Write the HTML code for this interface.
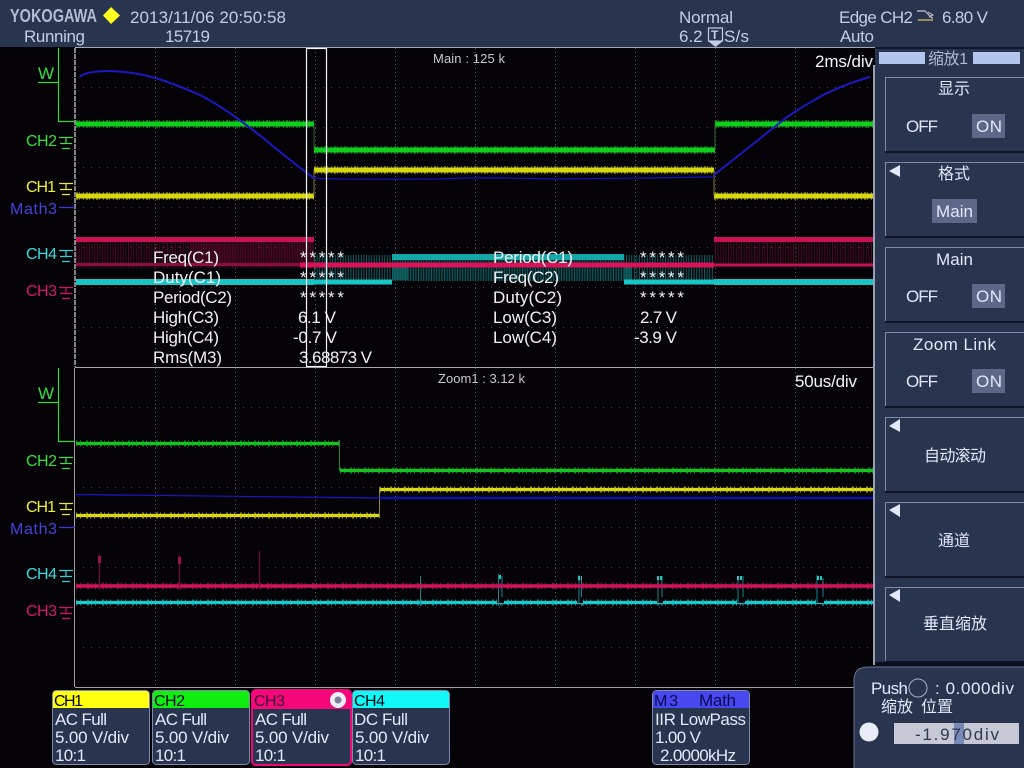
<!DOCTYPE html>
<html lang="zh">
<head>
<meta charset="utf-8">
<title>Oscilloscope</title>
<style>
html,body{margin:0;padding:0;width:1024px;height:768px;overflow:hidden;background:#050308}
svg{display:block}
text{font-family:"Liberation Sans","Noto Sans CJK SC",sans-serif;font-size:17px}
.h{fill:#c3cde6}
.m{fill:#f2f2f6}
.b{fill:#e2e8fa}
.d{fill:#050510}
.l{font-size:16px}
</style>
</head>
<body>
<svg width="1024" height="768" viewBox="0 0 1024 768" xmlns="http://www.w3.org/2000/svg">
<defs>
<pattern id="gv" x="155" y="48" width="80" height="4" patternUnits="userSpaceOnUse"><rect width="1" height="1" fill="#5e5e56"/></pattern>
<pattern id="gh" x="75" y="87" width="8" height="40" patternUnits="userSpaceOnUse"><rect width="1" height="1" fill="#4e4e4a"/></pattern>
</defs>

<!-- backgrounds -->
<rect width="1024" height="768" fill="#050308"/>
<rect width="1024" height="47" fill="#29344f"/>
<rect x="875" y="47" width="149" height="620" fill="#29344f"/>
<rect x="875" y="47" width="149" height="2" fill="#10162a"/>
<rect x="875" y="662" width="149" height="6" fill="#0b0f1c"/>

<!-- grid -->
<rect x="76" y="48" width="797" height="639" fill="url(#gv)"/>
<rect x="76" y="48" width="797" height="319" fill="url(#gh)"/>
<g transform="translate(0,320)"><rect x="76" y="48" width="797" height="319" fill="url(#gh)"/></g>

<!-- plot frame -->
<line x1="75" y1="47.5" x2="875" y2="47.5" stroke="#a8a8b0"/>
<line x1="75" y1="367.5" x2="873" y2="367.5" stroke="#a8a8a8"/>
<line x1="75" y1="687.5" x2="873" y2="687.5" stroke="#a0a0a0"/>
<line x1="75" y1="48" x2="75" y2="367" stroke="#b0b0b0" stroke-width="1.5" stroke-dasharray="5 1"/>
<line x1="74.5" y1="368" x2="74.5" y2="687" stroke="#a0a0a0"/>
<rect x="873" y="65" width="2" height="600" fill="#9aa0b4"/>

<!-- main traces: hatched bands -->
<line x1="76" y1="254" x2="314" y2="254" stroke="#4c0824" stroke-width="28" stroke-dasharray="1 1.6"/>
<rect x="235" y="241" width="78" height="26" fill="#4c0722" opacity=".5"/>
<rect x="190" y="243" width="45" height="22" fill="#500824" opacity=".6"/>
<line x1="715" y1="251" x2="873" y2="251" stroke="#4c0824" stroke-width="28" stroke-dasharray="1 1.6"/>
<line x1="314" y1="268" x2="714" y2="268" stroke="#0d5e5e" stroke-width="26" stroke-dasharray="1 1.6"/>
<rect x="392" y="255" width="232" height="26" fill="#0e5a5a" opacity=".25"/>
<rect x="392" y="266" width="16" height="14" fill="#126a6a" opacity=".7"/>
<rect x="624" y="266" width="8" height="14" fill="#126a6a" opacity=".7"/>

<!-- green main -->
<g stroke="#10cf1c" fill="none">
<path d="M76 124H314M715 124H873M314 150H715" stroke="#0f8a18" stroke-width="8" stroke-dasharray="2 1 1 3 1 2" opacity=".7"/>
<path d="M76 124H314M715 124H873M314 150H715" stroke="#10cf1c" stroke-width="5"/>
<path d="M314 124V150M715 124V150" stroke="#2c6a30" stroke-width="1"/>
</g>
<!-- yellow main -->
<g fill="none" stroke="#d8d812">
<path d="M76 196H314M314 170H714M714 196H873" stroke="#8a8a12" stroke-width="8" stroke-dasharray="2 1 1 3 1 2" opacity=".75"/>
<path d="M76 196H314M314 170H714M714 196H873" stroke-width="5"/>
<path d="M314 170V196M714 170V196" stroke="#7a7a30" stroke-width="1"/>
</g>
<!-- pink main -->
<path d="M76 239.500H314M714 239.500H873" stroke="#c81252" stroke-width="5" fill="none"/>
<path d="M76 264.500H300" stroke="#8c0e3e" stroke-width="3" fill="none"/>
<path d="M300 265H714" stroke="#dc1258" stroke-width="5" fill="none"/>
<path d="M714 265H873" stroke="#c8124f" stroke-width="3" fill="none"/>
<!-- cyan main -->
<path d="M76 282H314M714 282H873" stroke="#18c4c4" stroke-width="6" fill="none"/>
<path d="M314 282H392M624 282H714" stroke="#18c4c4" stroke-width="5" fill="none"/>
<path d="M392 257H624" stroke="#16a8a8" stroke-width="6" fill="none"/>
<!-- blue main -->
<path d="M314 178C340 180 380 179 440 179C480 177 500 178 560 179C620 178 660 178 714 177" stroke="#1414c0" stroke-width="1.200" fill="none"/>
<path d="M80 77C84 72 97 71 110 71C145 72 170 82 200 95C225 108 245 124 262 137C280 152 298 167 314 178" stroke="#1a1ac0" stroke-width="2" fill="none"/>
<path d="M714 175L777 125C795 110 808 104 823 95C840 87 855 81 870 77" stroke="#1a1ac0" stroke-width="2" fill="none"/>

<!-- zoom traces -->
<g fill="none">
<path d="M76 443.500H339M340 470.500H873" stroke="#12c81e" stroke-width="3.200"/>
<path d="M76 443.500H339M340 470.500H873" stroke="#12b81e" stroke-width="6" stroke-dasharray="1 3 1 5 2 2" opacity=".7"/>
<path d="M339.500 440V471" stroke="#2f8a2f"/>
<path d="M76 515.500H380M380 489.500H873" stroke="#dcdc12" stroke-width="3.200"/>
<path d="M76 515.500H380M380 489.500H873" stroke="#c8c812" stroke-width="6" stroke-dasharray="1 3 1 5 2 2" opacity=".7"/>
<path d="M379.500 487V518" stroke="#8a8a30"/>
<path d="M76 494.500L380 498" stroke="#1a1ac8" stroke-width="1.200"/>
<path d="M380 498H873" stroke="#0a0ad8" stroke-width="2"/>
<path d="M76 602.500H873" stroke="#18cfcf" stroke-width="3.200"/>
<path d="M76 602.500H873" stroke="#18bcbc" stroke-width="6" stroke-dasharray="1 3 1 6 2 2" opacity=".7"/>
<!-- cyan pulses -->
<path d="M420.500 576V606M502 576V606M581.500 576V606M662 576V606M743 576V606M823 578V606" stroke="#108888"/>
<path d="M497 600H504M577 600H583M657 600H663M737 600H745M816 600H824" stroke="#050308" stroke-width="6"/>
<path d="M498.500 574V606M579 575V604M658 576V604M738 576V604M817 575V604" stroke="#108888"/>
<path d="M499 577H502M578 578H582M657 578H662M737 578H743M817 578H823" stroke="#1cc8c8" stroke-width="4" stroke-dasharray="2 1"/>
<path d="M76 586H873" stroke="#d4145a" stroke-width="3.600"/>
<path d="M76 586H873" stroke="#c8145a" stroke-width="6.500" stroke-dasharray="1 3 1 6 2 2" opacity=".65"/>
<!-- pink spikes -->
<path d="M99.500 555V590M179.500 555V590M259.500 551V589" stroke="#701038" stroke-width="1.200"/>
<path d="M98 556H101V563H98ZM178 557H181V564H178Z" fill="#9c1244" stroke="none"/>
</g>

<!-- zoom window frame -->
<rect x="306.500" y="48.500" width="20" height="318" fill="none" stroke="#f4f4f4" stroke-width="1.200"/>

<!-- header text -->
<text x="10" y="22" fill="#b3bbd0" font-weight="bold" textLength="87" lengthAdjust="spacingAndGlyphs" style="font-size:18px">YOKOGAWA</text>
<path d="M111 7L120 15.500L111 24L103 15.500Z" fill="#ffff20"/>
<text x="130" y="23" class="h" textLength="156">2013/11/06 20:50:58</text>
<text x="24" y="42" class="h" textLength="61">Running</text>
<text x="165" y="42" class="h" textLength="45">15719</text>
<text x="679" y="23" class="h" textLength="54">Normal</text>
<text x="679" y="42" class="h">6.2</text>
<text x="724" y="42" class="h" textLength="25">S/s</text>
<rect x="708.500" y="28" width="14" height="13" fill="#29344f" stroke="#c3cde6" stroke-width="1.200"/>
<text x="711" y="39" class="h" style="font-size:12px;font-weight:bold">T</text>
<path d="M708 41H723L715.500 47Z" fill="#c3cde6"/>
<text x="839" y="23" class="h" textLength="74">Edge CH2</text>
<path d="M917 11H925L932 18H933" fill="none" stroke="#c8c8c8" stroke-width="1.200"/>
<path d="M918 20H933" stroke="#d0c060" stroke-width="1.300"/>
<path d="M928 12L933 15L929 17" fill="none" stroke="#c8c8c8"/>
<text x="942" y="23" class="h" textLength="46">6.80 V</text>
<text x="840" y="42" class="h" textLength="34">Auto</text>
<text x="815" y="67" fill="#f6f6f6" textLength="58">2ms/div</text>
<text x="795" y="387" fill="#f6f6f6" textLength="62">50us/div</text>
<text x="433" y="63" fill="#c8c8d0" textLength="72" style="font-size:13px">Main : 125 k</text>
<text x="438" y="383" fill="#c8c8d0" textLength="87" style="font-size:13px">Zoom1 : 3.12 k</text>

<!-- left channel labels -->
<g fill="none" stroke-width="1.200">
<path d="M58.500 48V121.500H75M38 82.500H58.500" stroke="#2ed83a"/>
<path d="M58.500 368V441.500H75M38 402.500H58.500" stroke="#2ed83a"/>
<path d="M59 207.500H75M59 527.500H75" stroke="#3a3ad8"/>
<g stroke="#40d84a"><path d="M59 137.500H73M66 137.500V143M60 143.500H72M62 148.500H70"/></g>
<g stroke="#e8e840"><path d="M59 183.500H73M66 183.500V189M60 189.500H72M62 194.500H70"/></g>
<g stroke="#30d0d0"><path d="M59 250.500H73M66 250.500V256M60 256.500H72M62 261.500H70"/></g>
<g stroke="#d01860"><path d="M59 287.500H73M66 287.500V293M60 293.500H72M62 298.500H70"/></g>
<g stroke="#40d84a"><path d="M59 457.500H73M66 457.500V463M60 463.500H72M62 468.500H70"/></g>
<g stroke="#e8e840"><path d="M59 503.500H73M66 503.500V509M60 509.500H72M62 514.500H70"/></g>
<g stroke="#30d0d0"><path d="M59 570.500H73M66 570.500V576M60 576.500H72M62 581.500H70"/></g>
<g stroke="#d01860"><path d="M59 607.500H73M66 607.500V613M60 613.500H72M62 618.500H70"/></g>
</g>
<g>
<text x="38" y="79" fill="#34e03e" textLength="14">W</text>
<text class="l" x="26" y="146" fill="#34e03e" textLength="31">CH2</text>
<text class="l" x="26" y="192" fill="#f0f030" textLength="30">CH1</text>
<text class="l" x="10" y="214" fill="#4444dc" textLength="47">Math3</text>
<text class="l" x="26" y="259" fill="#34dcdc" textLength="31">CH4</text>
<text class="l" x="26" y="296" fill="#d8186a" textLength="31">CH3</text>
<text x="38" y="399" fill="#34e03e" textLength="14">W</text>
<text class="l" x="26" y="466" fill="#34e03e" textLength="31">CH2</text>
<text class="l" x="26" y="512" fill="#f0f030" textLength="30">CH1</text>
<text class="l" x="10" y="534" fill="#4444dc" textLength="47">Math3</text>
<text class="l" x="26" y="579" fill="#34dcdc" textLength="31">CH4</text>
<text class="l" x="26" y="616" fill="#d8186a" textLength="31">CH3</text>
</g>

<!-- measurements -->
<g class="m">
<text class="m" x="153" y="263" textLength="66">Freq(C1)</text>
<text class="m" x="153" y="283" textLength="68">Duty(C1)</text>
<text class="m" x="153" y="303" textLength="79">Period(C2)</text>
<text class="m" x="153" y="323" textLength="66">High(C3)</text>
<text class="m" x="153" y="343" textLength="66">High(C4)</text>
<text class="m" x="153" y="363" textLength="69">Rms(M3)</text>
<text class="m" x="300" y="263" textLength="44">*****</text>
<text class="m" x="300" y="283" textLength="44">*****</text>
<text class="m" x="300" y="303" textLength="44">*****</text>
<text class="m" x="298" y="323" textLength="38">6.1 V</text>
<text class="m" x="293" y="343" textLength="44">-0.7 V</text>
<text class="m" x="299" y="363" textLength="73">3.68873 V</text>
<text class="m" x="493" y="263" textLength="80">Period(C1)</text>
<text class="m" x="493" y="283" textLength="66">Freq(C2)</text>
<text class="m" x="493" y="303" textLength="69">Duty(C2)</text>
<text class="m" x="493" y="323" textLength="64">Low(C3)</text>
<text class="m" x="493" y="343" textLength="64">Low(C4)</text>
<text class="m" x="640" y="263" textLength="44">*****</text>
<text class="m" x="640" y="283" textLength="44">*****</text>
<text class="m" x="640" y="303" textLength="44">*****</text>
<text class="m" x="640" y="323" textLength="37">2.7 V</text>
<text class="m" x="634" y="343" textLength="43">-3.9 V</text>
</g>

<!-- right menu -->
<rect x="879" y="52" width="46" height="12" fill="#b2c6ee"/>
<rect x="973" y="52" width="47" height="12" fill="#b2c6ee"/>
<text x="928" y="64" fill="#aeb8d2" textLength="40" style="font-size:16px">缩放1</text>

<g fill="none" stroke-width="1">
<path d="M885.500 151V77.500H1024M885.500 236V162.500H1024M885.500 321V247.500H1024M885.500 406V332.500H1024M885.500 491V417.500H1024M885.500 576V502.500H1024M885.500 661V587.500H1024" stroke="#8089a8"/>
</g>
<g fill="#0e1426">
<rect x="885" y="151" width="139" height="2"/>
<rect x="885" y="236" width="139" height="2"/>
<rect x="885" y="321" width="139" height="2"/>
<rect x="885" y="406" width="139" height="2"/>
<rect x="885" y="491" width="139" height="2"/>
<rect x="885" y="576" width="139" height="2"/>
<rect x="885" y="661" width="139" height="2"/>
</g>
<g fill="#e2e8fa">
<path d="M900 165V177L889 171Z"/>
<path d="M900 419V432L889 426Z"/>
<path d="M900 504V517L889 510Z"/>
<path d="M900 589V602L889 595Z"/>
</g>
<rect x="972" y="114" width="33" height="24" fill="#5d6888"/>
<rect x="932" y="199" width="45" height="24" fill="#5d6888"/>
<rect x="972" y="284" width="33" height="24" fill="#5d6888"/>
<rect x="972" y="369" width="33" height="24" fill="#5d6888"/>
<g>
<text class="b" x="938" y="94" textLength="32" style="font-size:16px">显示</text>
<text class="b" x="906" y="132" textLength="32">OFF</text>
<text class="b" x="976" y="132" textLength="26">ON</text>
<text class="b" x="938" y="179" textLength="32" style="font-size:16px">格式</text>
<text class="b" x="936" y="217" textLength="37">Main</text>
<text class="b" x="936" y="265" textLength="37">Main</text>
<text class="b" x="906" y="302" textLength="32">OFF</text>
<text class="b" x="976" y="302" textLength="26">ON</text>
<text class="b" x="913" y="350" textLength="83">Zoom Link</text>
<text class="b" x="906" y="387" textLength="32">OFF</text>
<text class="b" x="976" y="387" textLength="26">ON</text>
<text class="b" x="924" y="461" textLength="62" style="font-size:16px">自动滚动</text>
<text class="b" x="938" y="546" textLength="32" style="font-size:16px">通道</text>
<text class="b" x="923" y="629" textLength="64" style="font-size:16px">垂直缩放</text>
</g>

<!-- channel boxes -->
<g stroke="#8089a8" fill="#29344f">
<rect x="52.500" y="690.500" width="97" height="74" rx="4"/>
<rect x="152.500" y="690.500" width="97" height="74" rx="4"/>
<rect x="352.500" y="690.500" width="97" height="74" rx="4"/>
<rect x="652.500" y="690.500" width="97" height="74" rx="4"/>
</g>
<rect x="252" y="690" width="99" height="75" rx="4" fill="#29344f" stroke="#f0087a" stroke-width="2"/>
<path d="M53 708V694Q53 691 56 691H146Q149 691 149 694V708Z" fill="#ffff10"/>
<path d="M153 708V694Q153 691 156 691H246Q249 691 249 694V708Z" fill="#10ee10"/>
<path d="M252 709V694Q252 690 256 690H347Q351 690 351 694V709Z" fill="#f4087a"/>
<path d="M353 708V694Q353 691 356 691H446Q449 691 449 694V708Z" fill="#10f8f8"/>
<path d="M653 708V694Q653 691 656 691H746Q749 691 749 694V708Z" fill="#4848f0"/>
<circle cx="338" cy="700" r="8" fill="#eceff6"/>
<circle cx="338" cy="700" r="3.500" fill="#7c8098"/>
<g>
<text class="d l" x="54" y="706" textLength="29">CH1</text>
<text class="d l" x="154" y="706" textLength="31">CH2</text>
<text class="l" x="254" y="706" fill="#3a0a30" textLength="31">CH3</text>
<text class="d l" x="354" y="706" textLength="31">CH4</text>
<text class="l" x="654" y="706" fill="#0a0a50" textLength="24">M3</text>
<text x="699" y="706" fill="#0a0a50" textLength="37">Math</text>
<text class="b" x="55" y="725" textLength="52">AC Full</text>
<text class="b" x="55" y="743" textLength="74">5.00 V/div</text>
<text class="b" x="55" y="761" textLength="31">10:1</text>
<text class="b" x="155" y="725" textLength="52">AC Full</text>
<text class="b" x="155" y="743" textLength="74">5.00 V/div</text>
<text class="b" x="155" y="761" textLength="31">10:1</text>
<text class="b" x="255" y="725" textLength="52">AC Full</text>
<text class="b" x="255" y="743" textLength="74">5.00 V/div</text>
<text class="b" x="255" y="761" textLength="31">10:1</text>
<text class="b" x="354" y="725" textLength="54">DC Full</text>
<text class="b" x="355" y="743" textLength="74">5.00 V/div</text>
<text class="b" x="355" y="761" textLength="31">10:1</text>
<text class="b" x="655" y="725" textLength="91">IIR LowPass</text>
<text class="b" x="655" y="743" textLength="46">1.00 V</text>
<text class="b" x="660" y="761" textLength="76">2.0000kHz</text>
</g>

<!-- push panel -->
<path d="M854 768V680Q854 667 868 667H1024V768Z" fill="#29344f"/>
<path d="M854 768V680Q854 667 868 667H1024" fill="none" stroke="#6a7390" stroke-width="1"/>
<text class="b" x="871" y="694" textLength="37">Push</text>
<circle cx="918" cy="688" r="9" fill="none" stroke="#a8b0c8" stroke-width="1"/>
<text class="b" x="935" y="694" textLength="79">: 0.000div</text>
<text class="b" x="881" y="712" textLength="32" style="font-size:16px">缩放</text>
<text class="b" x="921" y="712" textLength="32" style="font-size:16px">位置</text>
<circle cx="869" cy="732" r="9.500" fill="#e8ecf8"/>
<rect x="894" y="723" width="125" height="21" fill="#c6c8d6"/>
<rect x="954" y="723" width="10" height="21" fill="#7a8ab8"/>
<text x="915" y="740" fill="#30384e" textLength="84">-1.970div</text>
</svg>
</body>
</html>
